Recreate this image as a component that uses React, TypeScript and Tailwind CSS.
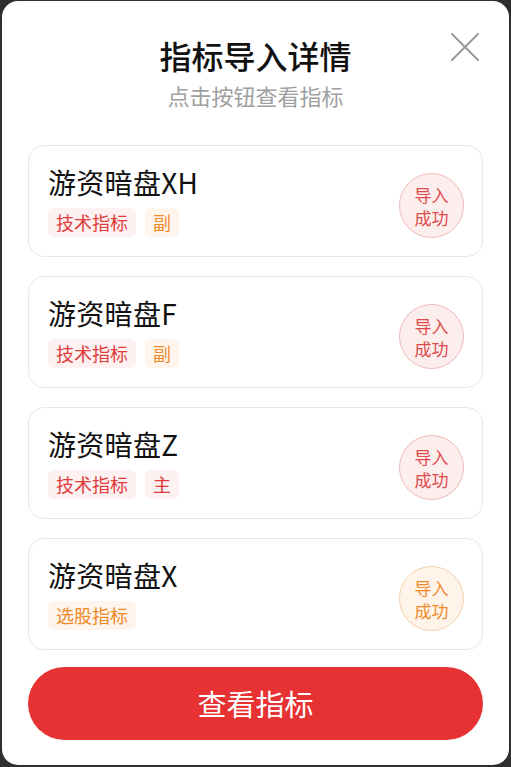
import React from "react";

type Item = { name: string; tags: { text: string; tone: "red" | "orange" }[]; tone: "red" | "orange" };

const items: Item[] = [
  { name: "游资暗盘XH", tags: [{ text: "技术指标", tone: "red" }, { text: "副", tone: "orange" }], tone: "red" },
  { name: "游资暗盘F", tags: [{ text: "技术指标", tone: "red" }, { text: "副", tone: "orange" }], tone: "red" },
  { name: "游资暗盘Z", tags: [{ text: "技术指标", tone: "red" }, { text: "主", tone: "red" }], tone: "red" },
  { name: "游资暗盘X", tags: [{ text: "选股指标", tone: "orange" }], tone: "orange" },
];

export default function App() {
  return (
    <div
      className="w-[511px] h-[767px] bg-[#2e2e2e] pt-[1px] pb-[2px] px-[2px]"
      style={{ fontFamily: '"Noto Sans CJK SC", "Noto Sans", sans-serif' }}
    >
      <div className="relative h-full bg-white rounded-[16px] px-[26px] pt-[33px] flex flex-col">
        <button className="absolute top-[32px] right-[30px] w-[28px] h-[28px] flex items-center justify-center">
          <svg width="28" height="28" viewBox="0 0 28 28">
            <path d="M1 1 L27 27 M27 1 L1 27" stroke="#9a9a9a" strokeWidth="2" strokeLinecap="round" />
          </svg>
        </button>
        <div className="text-center text-[32px] leading-[42px] text-[#111] font-medium">指标导入详情</div>
        <div className="text-center text-[22px] leading-[28px] text-[#a0a0a0] mt-[5px]">点击按钮查看指标</div>
        <div className="mt-[36px] flex flex-col gap-[19px]">
          {items.map((it) => (
            <div
              key={it.name}
              className="h-[112px] rounded-[16px] border border-[#e8e8e8] pl-[19px] pr-[18px] flex items-center justify-between"
            >
              <div className="flex flex-col">
                <div className="text-[28px] leading-[34px] text-[#111] tracking-[0.3px]">{it.name}</div>
                <div className="flex gap-[9px] mt-[9px]">
                  {it.tags.map((t) =>
                    t.tone === "red" ? (
                      <span key={t.text} className="h-[29px] px-[8px] rounded-[6px] bg-[#fdf1f1] text-[#df3b3b] text-[18px] leading-[29px]">
                        {t.text}
                      </span>
                    ) : (
                      <span key={t.text} className="h-[29px] px-[8px] rounded-[6px] bg-[#fff5ec] text-[#ee8a2a] text-[18px] leading-[29px]">
                        {t.text}
                      </span>
                    )
                  )}
                </div>
              </div>
              {it.tone === "red" ? (
                <div className="mt-[9px] w-[65px] h-[65px] rounded-full border border-[#f0b9b9] bg-[#fdeeee] text-[#de4a4a] text-[17px] leading-[23px] flex flex-col items-center justify-center">
                  <span>导入</span>
                  <span>成功</span>
                </div>
              ) : (
                <div className="mt-[9px] w-[65px] h-[65px] rounded-full border border-[#f5d0aa] bg-[#fff4ea] text-[#ee8a2a] text-[17px] leading-[23px] flex flex-col items-center justify-center">
                  <span>导入</span>
                  <span>成功</span>
                </div>
              )}
            </div>
          ))}
        </div>
        <button className="mt-[17px] h-[73px] w-full rounded-full bg-[#e63232] text-white text-[29px] flex items-center justify-center">
          查看指标
        </button>
      </div>
    </div>
  );
}
